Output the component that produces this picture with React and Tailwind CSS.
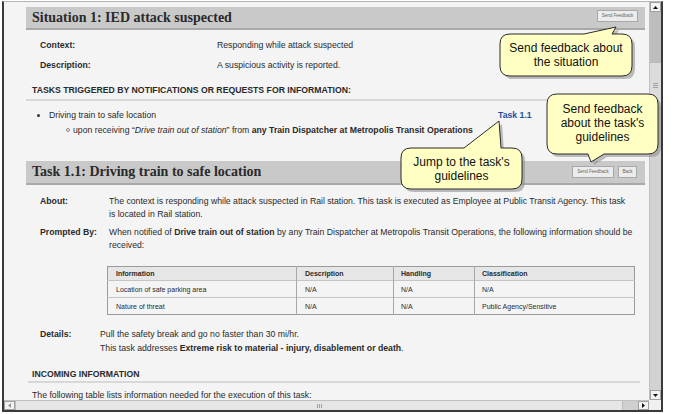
import React from "react";

function bubblePath(b) {
  const { x, y, w, h, r, tail } = b;
  const x2 = x + w, y2 = y + h;
  if (tail.side === "top") {
    return `M ${x + r} ${y} L ${tail.b1} ${y} L ${tail.ax} ${tail.ay} L ${tail.b2} ${y} L ${x2 - r} ${y} Q ${x2} ${y} ${x2} ${y + r} L ${x2} ${y2 - r} Q ${x2} ${y2} ${x2 - r} ${y2} L ${x + r} ${y2} Q ${x} ${y2} ${x} ${y2 - r} L ${x} ${y + r} Q ${x} ${y} ${x + r} ${y} Z`;
  }
  return `M ${x + r} ${y} L ${x2 - r} ${y} Q ${x2} ${y} ${x2} ${y + r} L ${x2} ${y2 - r} Q ${x2} ${y2} ${x2 - r} ${y2} L ${tail.b2} ${y2} L ${tail.ax} ${tail.ay} L ${tail.b1} ${y2} L ${x + r} ${y2} Q ${x} ${y2} ${x} ${y2 - r} L ${x} ${y + r} Q ${x} ${y} ${x + r} ${y} Z`;
}

const bubbles = [
  { x: 500, y: 34, w: 132, h: 42, r: 10, tail: { side: "top", b1: 584, b2: 612, ax: 616, ay: 27 } },
  { x: 547, y: 94, w: 111, h: 60, r: 10, tail: { side: "bottom", b1: 588, b2: 604, ax: 591, ay: 162 } },
  { x: 401, y: 148, w: 121, h: 41, r: 10, tail: { side: "top", b1: 464, b2: 501, ax: 499, ay: 121 } },
];

function Callouts() {
  return (
    <>
      <svg className="absolute left-0 top-0 pointer-events-none" width="674" height="414" viewBox="0 0 674 414">
        {bubbles.map((b, i) => (
          <g key={i}>
            <path d={bubblePath(b)} transform="translate(3 3)" fill="#8a8a8a" opacity="0.55" />
            <path d={bubblePath(b)} fill="#ffffc4" stroke="#2a2a2a" strokeWidth="1" />
          </g>
        ))}
      </svg>
      <div className="absolute left-[500px] top-[34px] w-[132px] h-[42px] flex items-center justify-center text-center text-[12px] leading-[14px] text-[#111]">
        Send feedback about<br />the situation
      </div>
      <div className="absolute left-[547px] top-[93px] w-[111px] h-[60px] flex items-center justify-center text-center text-[12px] leading-[14px] text-[#111]">
        Send feedback<br />about the task's<br />guidelines
      </div>
      <div className="absolute left-[401px] top-[148px] w-[121px] h-[41px] flex items-center justify-center text-center text-[12px] leading-[14px] text-[#111]">
        Jump to the task's<br />guidelines
      </div>
    </>
  );
}

function Btn({ children, className }) {
  return (
    <div className={"h-[12px] border border-[#a8a8a8] bg-[#ececec] text-[4.5px] text-[#666] flex items-center justify-center whitespace-nowrap " + className}>
      {children}
    </div>
  );
}

function VScroll() {
  return (
    <div className="w-[12px] flex flex-col bg-[#d2d2d2] border-l border-[#c0c0c0]">
      <div className="h-[10px] bg-[#f2f2f2] border border-[#a0a0a0] flex items-center justify-center">
        <svg width="5" height="3" viewBox="0 0 5 3"><path d="M0 3 L2.5 0 L5 3 Z" fill="#111" /></svg>
      </div>
      <div className="h-[50px] bg-[#bdbdbd]" />
      <div className="h-[46px] bg-[#dcdcdc] border-y border-[#b8b8b8] flex flex-col items-center justify-center gap-[1px]">
        <div className="w-[5px] h-px bg-[#a0a0a0]" />
        <div className="w-[5px] h-px bg-[#a0a0a0]" />
        <div className="w-[5px] h-px bg-[#a0a0a0]" />
      </div>
      <div className="flex-1" />
      <div className="h-[10px] bg-[#f2f2f2] border border-[#a0a0a0] flex items-center justify-center">
        <svg width="5" height="3" viewBox="0 0 5 3"><path d="M0 0 L2.5 3 L5 0 Z" fill="#111" /></svg>
      </div>
    </div>
  );
}

function HScroll() {
  return (
    <div className="flex-1 flex bg-[#cfcfcf] border-t border-[#c0c0c0]">
      <div className="w-[11px] bg-[#f2f2f2] border border-[#a0a0a0] flex items-center justify-center">
        <svg width="3" height="5" viewBox="0 0 3 5"><path d="M3 0 L0 2.5 L3 5 Z" fill="#999" /></svg>
      </div>
      <div className="w-[608px] bg-[#e6e6e6] border-x border-[#bdbdbd] flex items-center justify-center gap-[1px]">
        <div className="w-px h-[4px] bg-[#a0a0a0]" />
        <div className="w-px h-[4px] bg-[#a0a0a0]" />
        <div className="w-px h-[4px] bg-[#a0a0a0]" />
      </div>
      <div className="flex-1" />
      <div className="w-[11px] bg-[#f2f2f2] border border-[#a0a0a0] flex items-center justify-center">
        <svg width="3" height="5" viewBox="0 0 3 5"><path d="M0 0 L3 2.5 L0 5 Z" fill="#111" /></svg>
      </div>
    </div>
  );
}

const rows = [
  ["Location of safe parking area", "N/A", "N/A", "N/A"],
  ["Nature of threat", "N/A", "N/A", "Public Agency/Sensitive"],
];

export default function App() {
  return (
    <div className="relative w-[674px] h-[414px] bg-white overflow-hidden font-['Liberation_Sans',Arial,sans-serif] text-[#2a2a2a]">
      <div className="pt-[1px] pl-[2px]">
        <div className="w-[661px] h-[411px] border-t border-t-[#b5b5b5] border-x-2 border-x-[#3a3a3a] border-b-2 border-b-[#3a3a3a] flex flex-col">
          <div className="flex flex-1 min-h-0">
            <div className="flex-1 bg-[#f4f4f4] overflow-hidden pl-[22px] pr-[4px] text-[8.7px] leading-[12px]">
              {/* Situation bar */}
              <div className="mt-[5px] h-[23px] bg-[#c9c9c9] border-b-2 border-[#a9a9a9] flex items-start justify-between pl-[6px] pr-[7px]">
                <span className="self-center font-['Liberation_Serif',serif] font-bold text-[14px] leading-[16px] text-[#2a2a2a]">Situation 1: IED attack suspected</span>
                <Btn className="mt-[3px] w-[41px]">Send Feedback</Btn>
              </div>

              <div className="mt-[5px] pl-[14px]">
                <div className="flex h-[20px] items-center">
                  <span className="w-[177px] font-bold">Context:</span>
                  <span>Responding while attack suspected</span>
                </div>
                <div className="flex h-[20px] items-center">
                  <span className="w-[177px] font-bold">Description:</span>
                  <span>A suspicious activity is reported.</span>
                </div>
              </div>

              <div className="mt-[9px] pl-[6px] pb-[3px] border-b-2 border-[#d8d8d8] font-bold">
                TASKS TRIGGERED BY NOTIFICATIONS OR REQUESTS FOR INFORMATION:
              </div>

              <div className="mt-[8px] flex h-[12px] items-center">
                <span className="ml-[11px] w-[3px] h-[3px] rounded-full bg-[#333]" />
                <span className="ml-[9px] w-[449px]">Driving train to safe location</span>
                <span className="font-bold text-[#1f4ea3]">Task 1.1</span>
              </div>
              <div className="mt-[3px] flex h-[12px] items-center">
                <span className="ml-[40px] w-[4px] h-[4px] rounded-full border border-[#888]" />
                <span className="ml-[3px] whitespace-nowrap">
                  upon receiving “<i>Drive train out of station</i>” from <b>any Train Dispatcher at Metropolis Transit Operations</b>
                </span>
              </div>

              {/* Task bar */}
              <div className="mt-[25px] h-[24px] bg-[#c9c9c9] border-b-2 border-[#a9a9a9] flex items-start justify-between pl-[6px] pr-[8px]">
                <span className="self-center font-['Liberation_Serif',serif] font-bold text-[14px] leading-[16px] text-[#2a2a2a]">Task 1.1: Driving train to safe location</span>
                <div className="mt-[5px] flex gap-[4px]">
                  <Btn className="w-[42px]">Send Feedback</Btn>
                  <Btn className="w-[19px]">Back</Btn>
                </div>
              </div>

              <div className="mt-[10px] pl-[14px] flex leading-[13px]">
                <span className="w-[69px] shrink-0 font-bold">About:</span>
                <span className="whitespace-nowrap">
                  The context is responding while attack suspected in Rail station. This task is executed as Employee at Public Transit Agency. This task
                  <br />is located in Rail station.
                </span>
              </div>
              <div className="mt-[5px] pl-[14px] flex leading-[13px]">
                <span className="w-[69px] shrink-0 font-bold">Prompted By:</span>
                <span className="whitespace-nowrap">
                  When notified of <b>Drive train out of station</b> by any Train Dispatcher at Metropolis Transit Operations, the following information should be
                  <br />received:
                </span>
              </div>

              <table className="mt-[14px] ml-[81px] border-collapse border border-[#9a9a9a] text-[7px] leading-[9px] table-fixed w-[527px]">
                <thead>
                  <tr className="bg-[#e6e6e6] h-[14px]">
                    <th className="w-[189px] text-left font-bold pl-[8px] border-r border-[#a8a8a8]">Information</th>
                    <th className="w-[97px] text-left font-bold pl-[8px] border-r border-[#a8a8a8]">Description</th>
                    <th className="w-[81px] text-left font-bold pl-[7px] border-r border-[#a8a8a8]">Handling</th>
                    <th className="w-[160px] text-left font-bold pl-[7px]">Classification</th>
                  </tr>
                </thead>
                <tbody>
                  {rows.map((r, i) => (
                    <tr key={i} className="h-[17px] border-t border-[#c4c4c4]">
                      <td className="pl-[8px] border-r border-[#a8a8a8]">{r[0]}</td>
                      <td className="pl-[8px] border-r border-[#a8a8a8]">{r[1]}</td>
                      <td className="pl-[7px] border-r border-[#a8a8a8]">{r[2]}</td>
                      <td className="pl-[7px]">{r[3]}</td>
                    </tr>
                  ))}
                </tbody>
              </table>

              <div className="mt-[12px] pl-[14px] flex leading-[14px]">
                <span className="w-[60px] shrink-0 font-bold">Details:</span>
                <span className="whitespace-nowrap">
                  Pull the safety break and go no faster than 30 mi/hr.
                  <br />This task addresses <b>Extreme risk to material - injury, disablement or death</b>.
                </span>
              </div>

              <div className="mt-[13px] ml-[2px] mr-[5px] pl-[4px] pb-[1px] border-b-2 border-[#d8d8d8] font-bold">
                INCOMING INFORMATION
              </div>
              <div className="mt-[6px] pl-[6px]">The following table lists information needed for the execution of this task:</div>
            </div>
            <VScroll />
          </div>
          <div className="flex h-[10px]">
            <HScroll />
            <div className="w-[12px] bg-[#f0f0f0]" />
          </div>
        </div>
      </div>
      <Callouts />
    </div>
  );
}
